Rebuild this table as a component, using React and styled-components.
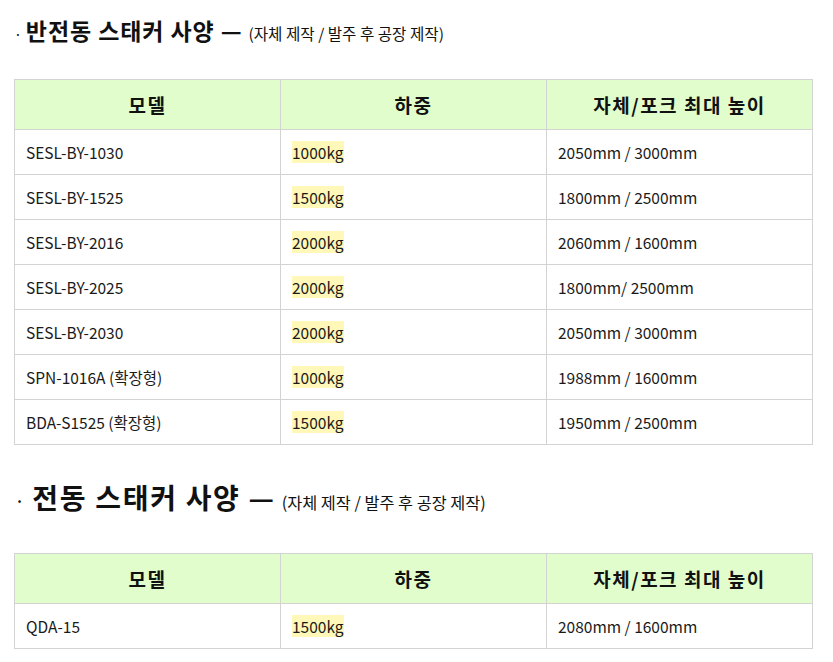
import styled, { createGlobalStyle } from "styled-components";

const GlobalStyle = createGlobalStyle`
  body {
    margin: 0;
    background: #fff;
    color: #111;
    font-family: "Noto Sans CJK KR", "Noto Sans", sans-serif;
  }
`;

const Page = styled.div`
  padding: 12px 20px 0 14px;
`;

const Section = styled.section`
  margin-bottom: ${(p) => p.$gap || 0}px;
`;

const Title = styled.h2`
  display: flex;
  align-items: baseline;
  height: ${(p) => p.$h}px;
  line-height: ${(p) => p.$h}px;
  margin: 0 0 ${(p) => p.$after}px;
  font-size: ${(p) => p.$size}px;
  font-weight: 700;
  letter-spacing: ${(p) => p.$ls}px;
`;

const Dot = styled.span`
  font-weight: 400;
  font-size: ${(p) => p.$size || 14}px;
  margin-right: ${(p) => p.$space || 4}px;
  letter-spacing: 0;
`;

const Note = styled.span`
  font-size: ${(p) => p.$size}px;
  font-weight: 400;
  margin-left: 6px;
  letter-spacing: 0;
`;

const Table = styled.table`
  width: 100%;
  border-collapse: collapse;
  table-layout: fixed;
  font-size: 15.5px;
`;

const Th = styled.th`
  height: 49px;
  padding: 0;
  background: #e1fdcb;
  border: 1px solid #d3d3d3;
  font-size: 19px;
  font-weight: 700;
  letter-spacing: 1.5px;
  text-align: center;
`;

const Td = styled.td`
  height: 44px;
  padding: 0 11px;
  border: 1px solid #d3d3d3;
  vertical-align: middle;
  color: #1a1a1a;
`;

const Mark = styled.span`
  background: #fff8b8;
`;

const rows1 = [
  ["SESL-BY-1030", "1000kg", "2050mm / 3000mm"],
  ["SESL-BY-1525", "1500kg", "1800mm / 2500mm"],
  ["SESL-BY-2016", "2000kg", "2060mm / 1600mm"],
  ["SESL-BY-2025", "2000kg", "1800mm/ 2500mm"],
  ["SESL-BY-2030", "2000kg", "2050mm / 3000mm"],
  ["SPN-1016A (확장형)", "1000kg", "1988mm / 1600mm"],
  ["BDA-S1525 (확장형)", "1500kg", "1950mm / 2500mm"],
];

const rows2 = [["QDA-15", "1500kg", "2080mm / 1600mm"]];

function SpecTable({ rows }) {
  return (
    <Table>
      <thead>
        <tr>
          <Th>모델</Th>
          <Th>하중</Th>
          <Th>자체/포크 최대 높이</Th>
        </tr>
      </thead>
      <tbody>
        {rows.map((r) => (
          <tr key={r[0]}>
            <Td>{r[0]}</Td>
            <Td>
              <Mark>{r[1]}</Mark>
            </Td>
            <Td>{r[2]}</Td>
          </tr>
        ))}
      </tbody>
    </Table>
  );
}

export default function App() {
  return (
    <Page>
      <GlobalStyle />
      <Section $gap={32}>
        <Title $size={23} $ls={0.9} $h={36} $after={31}>
          <Dot>·</Dot>반전동 스태커 사양 —<Note $size={15.6}>(자체 제작 / 발주 후 공장 제작)</Note>
        </Title>
        <SpecTable rows={rows1} />
      </Section>
      <Section>
        <Title $size={28} $ls={1.7} $h={40} $after={36}>
          <Dot $size={20} $space={7}>·</Dot>전동 스태커 사양 —<Note $size={16.3}>(자체 제작 / 발주 후 공장 제작)</Note>
        </Title>
        <SpecTable rows={rows2} />
      </Section>
    </Page>
  );
}
